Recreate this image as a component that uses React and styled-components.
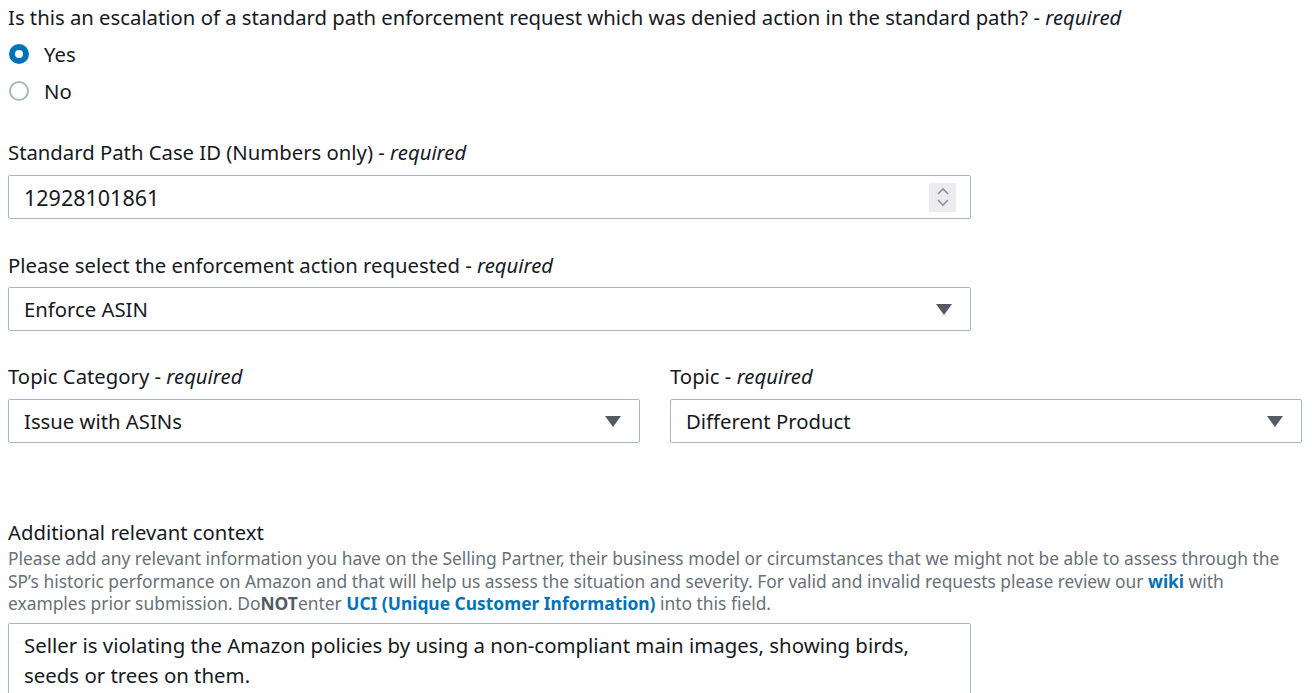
import React from 'react'
import styled, { createGlobalStyle } from 'styled-components'

const GlobalStyle = createGlobalStyle`
  body {
    margin: 0;
    padding: 0 8px;
    background: #fff;
    font-family: "Noto Sans", "Open Sans", sans-serif;
    color: #16191f;
  }
`

const Form = styled.div`
  display: flex;
  flex-direction: column;
  width: 1294px;
`

const Field = styled.div`
  display: flex;
  flex-direction: column;
  margin-top: ${p => p.$top || 0}px;
  width: ${p => p.$wide ? '100%' : '963px'};
`

const Label = styled.div`
  font-size: 20.3px;
  line-height: 30px;
  margin-bottom: ${p => p.$gap ?? 8}px;
  & em {
    font-style: italic;
  }
`

const RadioRow = styled.label`
  display: flex;
  align-items: center;
  gap: 15px;
  height: 37px;
  font-size: 20.3px;
`

const RadioDot = styled.span`
  box-sizing: border-box;
  width: 20px;
  height: 20px;
  margin-left: 1px;
  border-radius: 50%;
  border: ${p => p.$on ? '6px solid #0073bb' : '2px solid #aab7b8'};
  background: #fff;
`

const Box = styled.div`
  box-sizing: border-box;
  height: 44px;
  border: 1px solid #aab7b8;
  border-radius: 2px;
  display: flex;
  align-items: center;
  padding: 0 14px 0 15px;
  font-size: ${p => p.$num ? 21.5 : 20.3}px;
  justify-content: space-between;
`

const Spinner = styled.span`
  width: 27px;
  height: 29px;
  background: #ebebf0;
  display: flex;
  align-items: center;
  justify-content: center;
`

const Caret = styled.span`
  width: 0;
  height: 0;
  border-left: 8px solid transparent;
  border-right: 8px solid transparent;
  border-top: 11px solid #545b64;
  margin-right: 4px;
`

const Pair = styled.div`
  display: grid;
  grid-template-columns: 632px 632px;
  column-gap: 30px;
  margin-top: 30px;
`

const Help = styled.div`
  font-size: 17.4px;
  line-height: 22.5px;
  color: #687078;
  margin-bottom: 8px;
  & b {
    color: #545b64;
  }
`

const Link = styled.a`
  color: #0073bb;
  font-weight: 700;
  text-decoration: none;
`

const TextArea = styled.div`
  box-sizing: border-box;
  border: 1px solid #aab7b8;
  border-radius: 2px;
  padding: 6px 15px;
  font-size: 20.4px;
  line-height: 30px;
  min-height: 80px;
`

const Req = () => <> - <em>required</em></>

export default function App() {
  return (
    <>
      <GlobalStyle />
      <Form>
        <Field $wide>
          <Label $gap={3} style={{ marginTop: 2 }}>
            Is this an escalation of a standard path enforcement request which was denied action in the standard path?<Req />
          </Label>
          <RadioRow><RadioDot $on />Yes</RadioRow>
          <RadioRow><RadioDot />No</RadioRow>
        </Field>

        <Field $top={28}>
          <Label>Standard Path Case ID (Numbers only)<Req /></Label>
          <Box $num>
            12928101861
            <Spinner>
              <svg width="14" height="22" viewBox="0 0 14 22" fill="none" stroke="#8d949c" strokeWidth="1.6">
                <path d="M2 8 L7 3 L12 8" />
                <path d="M2 14 L7 19 L12 14" />
              </svg>
            </Spinner>
          </Box>
        </Field>

        <Field $top={31}>
          <Label $gap={7}>Please select the enforcement action requested<Req /></Label>
          <Box>Enforce ASIN<Caret /></Box>
        </Field>

        <Pair>
          <Field $wide>
            <Label>Topic Category<Req /></Label>
            <Box>Issue with ASINs<Caret /></Box>
          </Field>
          <Field $wide>
            <Label>Topic<Req /></Label>
            <Box>Different Product<Caret /></Box>
          </Field>
        </Pair>

        <Field $wide $top={74}>
          <Label $gap={0}>Additional relevant context</Label>
          <Help>
            Please add any relevant information you have on the Selling Partner, their business model or circumstances that we might not be able to assess through the SP’s historic performance on Amazon and that will help us assess the situation and severity. For valid and invalid requests please review our <Link>wiki</Link> with examples prior submission. Do<b>NOT</b>enter <Link>UCI (Unique Customer Information)</Link> into this field.
          </Help>
        </Field>
        <Field>
          <TextArea>
            Seller is violating the Amazon policies by using a non-compliant main images, showing birds, seeds or trees on them.
          </TextArea>
        </Field>
      </Form>
    </>
  )
}
